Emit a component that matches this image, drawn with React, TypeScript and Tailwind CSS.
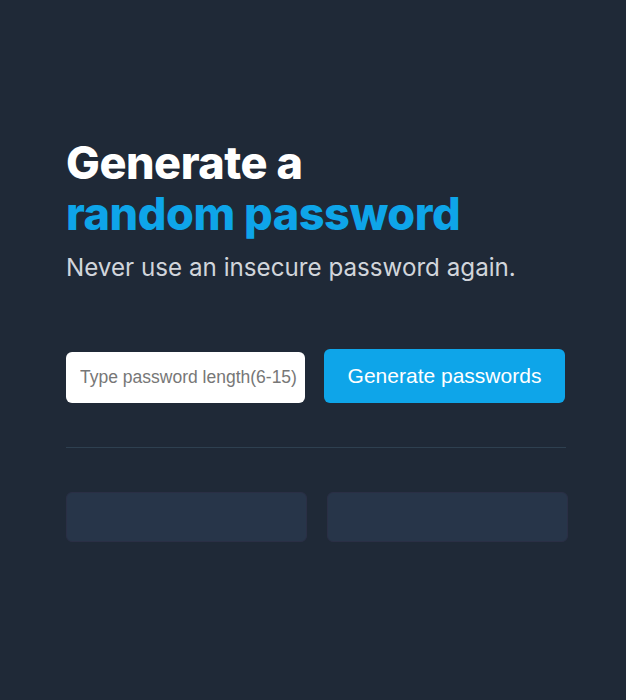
export default function App() {
  return (
    <div className="min-h-[700px] w-full bg-[#1f2937]" style={{ fontFamily: "Inter, 'Noto Sans', sans-serif" }}>
      <div className="ml-[66px] w-[500px] pt-[137px]">
        <h1 className="text-[45px] font-extrabold leading-[51px] tracking-[-0.01em] text-white">
          Generate a
          <br />
          <span className="text-[#0ea5e9]">random password</span>
        </h1>
        <p className="mt-[12px] text-[24.2px] leading-[34px] text-[#d1d5db]">Never use an insecure password again.</p>
        <div className="mt-[64px] flex items-end gap-[19px]">
          <input
            type="text"
            placeholder="Type password length(6-15)"
            className="h-[51px] w-[239px] shrink-0 rounded-[6px] bg-white pl-[14px] pr-[2px] text-[17.5px] text-[#374151] outline-none placeholder:text-[#777777]"
            style={{ fontFamily: "'Liberation Sans', Arial, sans-serif" }}
          />
          <button
            className="h-[54px] w-[241px] shrink-0 rounded-[6px] bg-[#0ea5e9] text-[21px] text-white"
            style={{ fontFamily: "'Liberation Sans', Arial, sans-serif" }}
          >
            Generate passwords
          </button>
        </div>
        <div className="mt-[44px] h-px w-[500px] bg-[#2e4050]" />
        <div className="mt-[44px] flex gap-[20px]">
          <div className="h-[50px] w-[241px] shrink-0 rounded-[6px] border border-[#2a2f45] bg-[#273549]" />
          <div className="h-[50px] w-[241px] shrink-0 rounded-[6px] border border-[#2a2f45] bg-[#273549]" />
        </div>
      </div>
    </div>
  );
}
